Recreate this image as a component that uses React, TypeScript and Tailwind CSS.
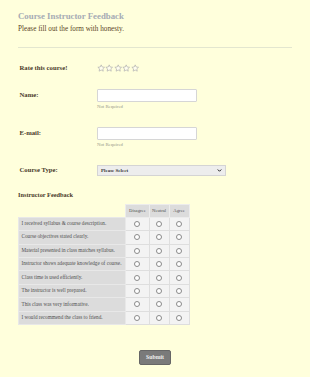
const questions = [
  "I received syllabus & course description.",
  "Course objectives stated clearly.",
  "Material presented in class matches syllabus.",
  "Instructor shows adequate knowledge of course.",
  "Class time is used efficiently.",
  "The instructor is well prepared.",
  "This class was very informative.",
  "I would recommend the class to friend.",
];

function Star() {
  return (
    <svg viewBox="0 0 24 24" className="w-[8.4px] h-[8.4px]">
      <path
        d="M12 2.5l2.9 6.1 6.6.8-4.9 4.5 1.3 6.6L12 17.2l-5.9 3.3 1.3-6.6-4.9-4.5 6.6-.8z"
        fill="#fffef0"
        stroke="#a8a8a8"
        strokeWidth="1.8"
        strokeLinejoin="round"
      />
    </svg>
  );
}

function Radio() {
  return <div className="w-[6px] h-[6px] rounded-full border border-[#8a8a8a] bg-white mx-auto" />;
}

export default function App() {
  return (
    <div className="min-h-[377px] bg-[#ffffdc] font-['Liberation_Serif',serif] px-[18px] pb-[12px]">
      {/* Header */}
      <div className="pt-[11px]">
        <div className="h-[11px] leading-[11px] text-[8.8px] font-bold text-[#a6abb4]">
          Course Instructor Feedback
        </div>
        <div className="mt-[2.5px] h-[9px] leading-[9px] text-[7.2px] text-[#5a4424]">
          Please fill out the form with honesty.
        </div>
      </div>
      <div className="mt-[13px] border-t border-[#e3e6cf]" />

      {/* Rating */}
      <div className="mt-[16.5px] pl-[1.5px] flex items-center h-[9px]">
        <div className="w-[77.5px] text-[6.7px] font-bold text-[#4a3a2a]">Rate this course!</div>
        <div className="flex">
          {[0, 1, 2, 3, 4].map((i) => (
            <Star key={i} />
          ))}
        </div>
      </div>

      {/* Name */}
      <div className="mt-[16.3px] pl-[1.5px] flex items-start">
        <div className="w-[77.5px] h-[12.4px] flex items-center text-[6.7px] font-bold text-[#4a3a2a]">Name:</div>
        <div>
          <div className="w-[100px] h-[12.4px] bg-white border border-[#d6d6d6] rounded-[1px]" />
          <div className="mt-[2px] h-[6px] leading-[6px] text-[4.8px] text-[#9a9a8a]">Not Required</div>
        </div>
      </div>

      {/* Email */}
      <div className="mt-[17.6px] pl-[1.5px] flex items-start">
        <div className="w-[77.5px] h-[12.4px] flex items-center text-[6.7px] font-bold text-[#4a3a2a]">E-mail:</div>
        <div>
          <div className="w-[100px] h-[12.4px] bg-white border border-[#d6d6d6] rounded-[1px]" />
          <div className="mt-[2px] h-[6px] leading-[6px] text-[4.8px] text-[#9a9a8a]">Not Required</div>
        </div>
      </div>

      {/* Course type */}
      <div className="mt-[17.3px] pl-[1.5px] flex items-center">
        <div className="w-[77.5px] text-[6.7px] font-bold text-[#4a3a2a]">Course Type:</div>
        <div className="w-[129.3px] h-[10.7px] bg-[#ededed] border border-[#d4d4d4] flex items-center justify-between px-[3px]">
          <span className="text-[5px] font-bold text-[#333]">Please Select</span>
          <svg viewBox="0 0 10 10" className="w-[5px] h-[5px]">
            <path d="M1.5 3l3.5 3.5L8.5 3" fill="none" stroke="#222" strokeWidth="2" />
          </svg>
        </div>
      </div>

      {/* Instructor feedback */}
      <div className="mt-[15.6px] h-[8px] leading-[8px] text-[6.3px] font-bold text-[#4a3a2a]">Instructor Feedback</div>

      <table className="mt-[5px] border-collapse text-[#505050] table-fixed w-[170.6px]">
        <thead>
          <tr className="h-[12.4px]">
            <th className="w-[107.3px] p-0" />
            <th className="w-[23.3px] p-0 bg-[#dcdcdc] border border-[#ececec] text-[4.7px] font-normal">Disagree</th>
            <th className="w-[20px] p-0 bg-[#dcdcdc] border border-[#ececec] text-[4.7px] font-normal">Neutral</th>
            <th className="w-[20px] p-0 bg-[#dcdcdc] border border-[#ececec] text-[4.7px] font-normal">Agree</th>
          </tr>
        </thead>
        <tbody>
          {questions.map((q) => (
            <tr key={q} className="h-[13.45px]">
              <td className="p-0 pl-[2.5px] bg-[#dcdcdc] border border-[#e8e8e8] text-[5.2px] text-left whitespace-nowrap">{q}</td>
              <td className="p-0 bg-[#f3f3f3] border border-[#dedede]">
                <Radio />
              </td>
              <td className="p-0 bg-[#f3f3f3] border border-[#dedede]">
                <Radio />
              </td>
              <td className="p-0 bg-[#f3f3f3] border border-[#dedede]">
                <Radio />
              </td>
            </tr>
          ))}
        </tbody>
      </table>

      <div className="mt-[24.7px] flex justify-center">
        <button className="w-[32.7px] h-[15.3px] rounded-[2px] bg-[#7a7a7a] border border-[#666] text-[5.8px] font-bold text-[#eeeeee]">
          Submit
        </button>
      </div>
    </div>
  );
}
